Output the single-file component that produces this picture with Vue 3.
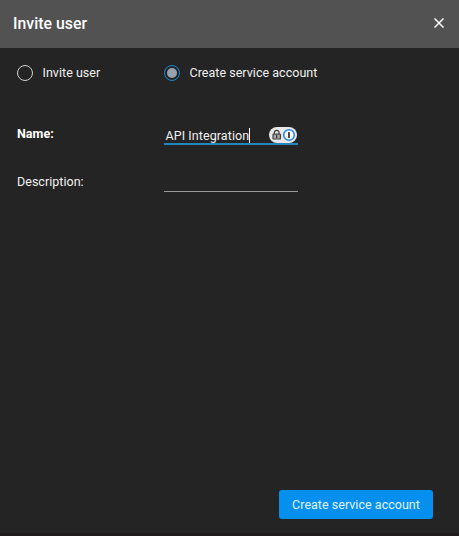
<script setup>
import { ref } from 'vue'

const mode = ref('service')
const name = ref('API Integration')
const options = [
  { id: 'invite', label: 'Invite user' },
  { id: 'service', label: 'Create service account' },
]
</script>

<template>
  <section class="dialog">
    <header class="header">
      <h1 class="title">Invite user</h1>
      <button class="close" aria-label="Close">
        <svg width="10" height="10" viewBox="0 0 10 10">
          <path d="M0.5 0.5L9.5 9.5M9.5 0.5L0.5 9.5" stroke="#fff" stroke-width="1.5" fill="none" />
        </svg>
      </button>
    </header>

    <div class="body">
      <div class="options">
        <div v-for="o in options" :key="o.id" class="option" @click="mode = o.id">
          <span class="radio" :class="{ checked: mode === o.id }"></span>
          <span>{{ o.label }}</span>
        </div>
      </div>

      <div class="row name-row">
        <span class="label strong">Name:</span>
        <div class="field active">
          <span class="value">{{ name }}</span>
          <span class="caret"></span>
          <span class="badge">
            <svg width="28" height="16" viewBox="0 0 28 16">
              <path d="M5.4 7.2V5.6a2.3 2.3 0 0 1 4.6 0v1.6" fill="none" stroke="#444" stroke-width="1.3" />
              <rect x="4" y="7.2" width="7.4" height="4.8" rx=".6" fill="#aaa" stroke="#444" stroke-width="1.2" />
              <rect x="7.1" y="8" width="1.2" height="3.2" fill="#333" />
              <circle cx="20" cy="8" r="5.3" fill="#fff" stroke="#2489ee" stroke-width="1.6" />
              <rect x="19.1" y="5" width="1.8" height="6" rx=".5" fill="#333" />
            </svg>
          </span>
        </div>
      </div>

      <div class="row">
        <span class="label">Description:</span>
        <div class="field"></div>
      </div>
    </div>

    <footer class="footer">
      <button class="submit">Create service account</button>
    </footer>
  </section>
</template>

<style>
body {
  background: #242424;
}
</style>

<style scoped>
.dialog {
  box-sizing: border-box;
  width: 459px;
  height: 536px;
  display: flex;
  flex-direction: column;
  background: #242424;
  border-bottom: 3px solid #201c1e;
  color: #f0f0f0;
  font: 12.5px/20px Roboto, sans-serif;
  letter-spacing: 0.03px;
}
.header {
  height: 48px;
  box-sizing: border-box;
  padding: 0 15px 2px 13px;
  display: flex;
  align-items: center;
  justify-content: space-between;
  background: #525252;
}
.title {
  margin: 0;
  padding-top: 2px;
  font-size: 15.8px;
  line-height: 24px;
  font-weight: 500;
  color: #fff;
}
.close {
  display: flex;
  padding: 0;
  border: 0;
  background: none;
}
.body {
  flex: 1;
  padding: 15px 17px 0;
}
.options {
  display: grid;
  grid-template-columns: 147px 1fr;
}
.option {
  display: flex;
  align-items: center;
  gap: 9.5px;
  height: 20px;
}
.radio {
  box-sizing: border-box;
  width: 16px;
  height: 16px;
  border: 1px solid #d0d0d0;
  border-radius: 50%;
  display: flex;
  align-items: center;
  justify-content: center;
}
.radio.checked {
  border-color: #1688d0;
}
.radio.checked::after {
  content: '';
  width: 10px;
  height: 10px;
  border-radius: 50%;
  background: #97a3ac;
}
.row {
  display: grid;
  grid-template-columns: 147px 134px;
  height: 26px;
}
.name-row {
  margin: 36px 0 22px;
}
.label {
  padding-top: 5px;
}
.strong {
  font-weight: 700;
  color: #fff;
}
.field {
  box-sizing: border-box;
  height: 25px;
  display: flex;
  align-items: center;
  border-bottom: 1px solid #999;
}
.field.active {
  height: 26px;
  padding: 9px 1px 0 1.5px;
  border-bottom: 2px solid #2386bd;
}
.value {
  letter-spacing: 0.08px;
  line-height: 19px;
}
.caret {
  width: 1px;
  height: 15px;
  background: #fff;
}
.badge {
  display: flex;
  align-self: flex-end;
  margin: -1px 0 0 auto;
  border-radius: 8px;
  background: #e9e9e9;
}
.footer {
  display: flex;
  justify-content: flex-end;
  padding: 0 26px 14px;
}
.submit {
  width: 154px;
  height: 29px;
  padding: 0;
  border: 0;
  border-radius: 3px;
  background: #0590f0;
  color: #e2f4ff;
  font: inherit;
  letter-spacing: inherit;
}
</style>
